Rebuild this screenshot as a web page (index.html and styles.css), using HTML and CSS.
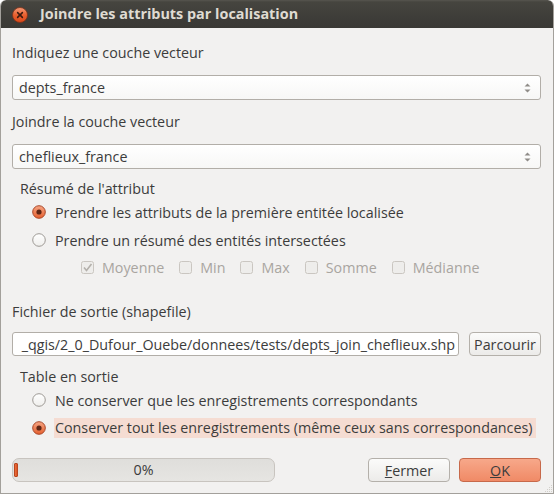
FILE: index.html
```html
<!DOCTYPE html>
<html>
<head>
<meta charset="utf-8">
<link rel="stylesheet" href="styles.css">
</head>
<body>
<div class="window">
  <div class="titlebar">
    <svg class="close" width="16" height="16" viewBox="0 0 16 16">
      <defs>
        <linearGradient id="cg" x1="0" y1="0" x2="0" y2="1">
          <stop offset="0" stop-color="#f39a78"/>
          <stop offset="0.5" stop-color="#e8602f"/>
          <stop offset="1" stop-color="#d9481a"/>
        </linearGradient>
      </defs>
      <circle cx="8" cy="8" r="7.5" fill="url(#cg)" stroke="#7d3219" stroke-width="0.8"/>
      <path d="M5.6 5.6 L10.4 10.4 M10.4 5.6 L5.6 10.4" stroke="#3b1a0f" stroke-width="1.5" stroke-linecap="round"/>
    </svg>
    <span class="title">Joindre les attributs par localisation</span>
  </div>
  <div class="content">
    <div class="label l-first">Indiquez une couche vecteur</div>
    <div class="combo">
      <span class="combo-text">depts_france</span>
      <svg class="arrows" width="7" height="12" viewBox="0 0 7 12"><path d="M3.5 1.5 L6.5 4.5 L0.5 4.5 Z M0.5 7.5 L6.5 7.5 L3.5 10.5 Z" fill="#8f8c88"/></svg>
    </div>
    <div class="label l-gap">Joindre la couche vecteur</div>
    <div class="combo">
      <span class="combo-text">cheflieux_france</span>
      <svg class="arrows" width="7" height="12" viewBox="0 0 7 12"><path d="M3.5 1.5 L6.5 4.5 L0.5 4.5 Z M0.5 7.5 L6.5 7.5 L3.5 10.5 Z" fill="#8f8c88"/></svg>
    </div>

    <div class="group-title g-first">Résumé de l'attribut</div>
    <div class="radio-row">
      <svg class="radio" width="14" height="14" viewBox="0 0 14 14">
        <defs>
          <linearGradient id="rg" x1="0" y1="0" x2="0" y2="1">
            <stop offset="0" stop-color="#f6a583"/>
            <stop offset="1" stop-color="#e5602f"/>
          </linearGradient>
        </defs>
        <circle cx="7" cy="7" r="6.3" fill="url(#rg)" stroke="#a9482a" stroke-width="1"/>
        <circle cx="7" cy="7" r="2.6" fill="#5e2615"/>
      </svg>
      <span>Prendre les attributs de la première entitée localisée</span>
    </div>
    <div class="radio-row">
      <svg class="radio" width="14" height="14" viewBox="0 0 14 14">
        <defs>
          <linearGradient id="wg" x1="0" y1="0" x2="0" y2="1">
            <stop offset="0" stop-color="#ffffff"/>
            <stop offset="1" stop-color="#efeeec"/>
          </linearGradient>
        </defs>
        <circle cx="7" cy="7" r="6.3" fill="url(#wg)" stroke="#9d9994" stroke-width="1"/>
      </svg>
      <span>Prendre un résumé des entités intersectées</span>
    </div>
    <div class="check-row">
      <div class="check">
        <svg class="box" width="13" height="13" viewBox="0 0 13 13">
          <rect x="0.5" y="0.5" width="12" height="12" rx="2" fill="#eeedeb" stroke="#cac6c1"/>
          <path d="M3 6.5 L5.5 9.5 L10.5 3" fill="none" stroke="#b4b0ab" stroke-width="1.6"/>
        </svg>
        <span>Moyenne</span>
      </div>
      <div class="check">
        <svg class="box" width="13" height="13" viewBox="0 0 13 13">
          <rect x="0.5" y="0.5" width="12" height="12" rx="2" fill="#eeedeb" stroke="#cac6c1"/>
        </svg>
        <span>Min</span>
      </div>
      <div class="check">
        <svg class="box" width="13" height="13" viewBox="0 0 13 13">
          <rect x="0.5" y="0.5" width="12" height="12" rx="2" fill="#eeedeb" stroke="#cac6c1"/>
        </svg>
        <span>Max</span>
      </div>
      <div class="check">
        <svg class="box" width="13" height="13" viewBox="0 0 13 13">
          <rect x="0.5" y="0.5" width="12" height="12" rx="2" fill="#eeedeb" stroke="#cac6c1"/>
        </svg>
        <span>Somme</span>
      </div>
      <div class="check">
        <svg class="box" width="13" height="13" viewBox="0 0 13 13">
          <rect x="0.5" y="0.5" width="12" height="12" rx="2" fill="#eeedeb" stroke="#cac6c1"/>
        </svg>
        <span>Médianne</span>
      </div>
    </div>

    <div class="label l-file">Fichier de sortie (shapefile)</div>
    <div class="file-row">
      <div class="path"><span>_qgis/2_0_Dufour_Ouebe/donnees/tests/depts_join_cheflieux.shp</span></div>
      <div class="button browse">Parcourir</div>
    </div>

    <div class="group-title g-table">Table en sortie</div>
    <div class="radio-row">
      <svg class="radio" width="14" height="14" viewBox="0 0 14 14">
        <circle cx="7" cy="7" r="6.3" fill="url(#wg)" stroke="#9d9994" stroke-width="1"/>
      </svg>
      <span>Ne conserver que les enregistrements correspondants</span>
    </div>
    <div class="radio-row">
      <svg class="radio" width="14" height="14" viewBox="0 0 14 14">
        <circle cx="7" cy="7" r="6.3" fill="url(#rg)" stroke="#a9482a" stroke-width="1"/>
        <circle cx="7" cy="7" r="2.6" fill="#5e2615"/>
      </svg>
      <span class="focused">Conserver tout les enregistrements (même ceux sans correspondances)</span>
    </div>

    <div class="bottom-row">
      <div class="progress">
        <div class="chunk"></div>
        <span class="pct">0%</span>
      </div>
      <div class="buttons">
        <div class="button fermer"><u>F</u>ermer</div>
        <div class="button ok"><u>O</u>K</div>
      </div>
    </div>
  </div>
  <svg class="grip" width="9" height="9" viewBox="0 0 9 9">
    <g fill="#d2cfca">
      <rect x="7" y="1" width="1" height="1"/>
      <rect x="5" y="3" width="1" height="1"/><rect x="7" y="3" width="1" height="1"/>
      <rect x="3" y="5" width="1" height="1"/><rect x="5" y="5" width="1" height="1"/><rect x="7" y="5" width="1" height="1"/>
      <rect x="1" y="7" width="1" height="1"/><rect x="3" y="7" width="1" height="1"/><rect x="5" y="7" width="1" height="1"/><rect x="7" y="7" width="1" height="1"/>
    </g>
  </svg>
</div>
</body>
</html>
```

FILE: styles.css
```css
html, body {
  margin: 0;
  padding: 0;
  background: #ffffff;
}

body {
  font-family: "Open Sans", "Noto Sans", sans-serif;
  font-size: 14.3px;
  color: #3c3c3c;
}

.window {
  position: relative;
  width: 554px;
  height: 494px;
  box-sizing: border-box;
  background: #f2f1f0;
  border: 1px solid #a3a09b;
  border-top: none;
  border-radius: 6px 6px 0 0;
  overflow: hidden;
  display: flex;
  flex-direction: column;
}

.titlebar {
  height: 28px;
  flex: none;
  margin: 0 -1px;
  background: linear-gradient(#57554f 0, #46453f 2px, #3e3d39 60%, #3a3935 100%);
  border-radius: 6px 6px 0 0;
  display: flex;
  align-items: center;
  padding-left: 12px;
}

.close {
  display: block;
  margin-top: 2px;
  margin-right: 12px;
}

.title {
  font-weight: bold;
  font-size: 14.4px;
  color: #dfdbd2;
  line-height: 18px;
}

.content {
  flex: 1;
  display: flex;
  flex-direction: column;
  padding: 0 12px 0 11px;
}

.label, .group-title {
  line-height: 18px;
  height: 18px;
  white-space: nowrap;
}

.l-first { margin-top: 16px; }
.l-gap { margin-top: 13px; }
.l-file { margin-top: 23px; }

.group-title { padding-left: 8px; }
.g-first { margin-top: 11px; }
.g-table { margin-top: 12px; }

.combo {
  margin-top: 13px;
  height: 25px;
  box-sizing: border-box;
  border: 1px solid #b2aea8;
  border-radius: 3px;
  background: linear-gradient(#ffffff, #f7f7f6);
  display: flex;
  align-items: center;
  justify-content: space-between;
  padding: 0 9px 0 6px;
}

.arrows { display: block; }

.radio-row {
  height: 28px;
  display: flex;
  align-items: center;
  padding-left: 20px;
  white-space: nowrap;
}

.radio {
  display: block;
  flex: none;
  margin-right: 9px;
}

.focused {
  background: #f5dcd2;
  padding: 0 3px 0 1px;
  margin-left: -1px;
  line-height: 20px;
}

.check-row {
  height: 26px;
  display: flex;
  align-items: center;
  padding-left: 69px;
  gap: 15px;
  color: #a9a5a0;
}

.check {
  display: flex;
  align-items: center;
  gap: 8px;
}

.box { display: block; }

.file-row {
  margin-top: 11px;
  height: 24px;
  display: flex;
  gap: 10px;
}

.path {
  flex: 1;
  min-width: 0;
  box-sizing: border-box;
  border: 1px solid #b2aea8;
  border-radius: 3px;
  background: #ffffff;
  display: flex;
  align-items: center;
  justify-content: flex-end;
  overflow: hidden;
  padding: 0 3px;
  white-space: nowrap;
}

.button {
  box-sizing: border-box;
  border: 1px solid #b4b0aa;
  border-radius: 4px;
  background: linear-gradient(#fbfbfa, #ecebe9);
  display: flex;
  align-items: center;
  justify-content: center;
  white-space: nowrap;
}

.browse {
  width: 72px;
  flex: none;
}

.bottom-row {
  margin-top: 16px;
  height: 24px;
  display: flex;
  justify-content: space-between;
}

.progress {
  position: relative;
  width: 263px;
  box-sizing: border-box;
  border: 1px solid #c8c4bf;
  border-radius: 7px;
  background: linear-gradient(#dfdedb, #e6e5e2);
  display: flex;
  align-items: center;
  justify-content: center;
}

.chunk {
  position: absolute;
  left: 1px;
  top: 4px;
  width: 4px;
  height: 14px;
  background: linear-gradient(90deg, #e9703f, #dd5322);
  border: 1px solid #b9461f;
  box-sizing: border-box;
  border-radius: 1px;
}

.pct { line-height: 18px; }

.buttons {
  display: flex;
  gap: 9px;
}

.fermer { width: 82px; }

.ok {
  width: 82px;
  border-color: #c7694a;
  background: linear-gradient(#f7a88a, #f08a66);
}

.grip {
  position: absolute;
  right: 0;
  bottom: 0;
}
```
